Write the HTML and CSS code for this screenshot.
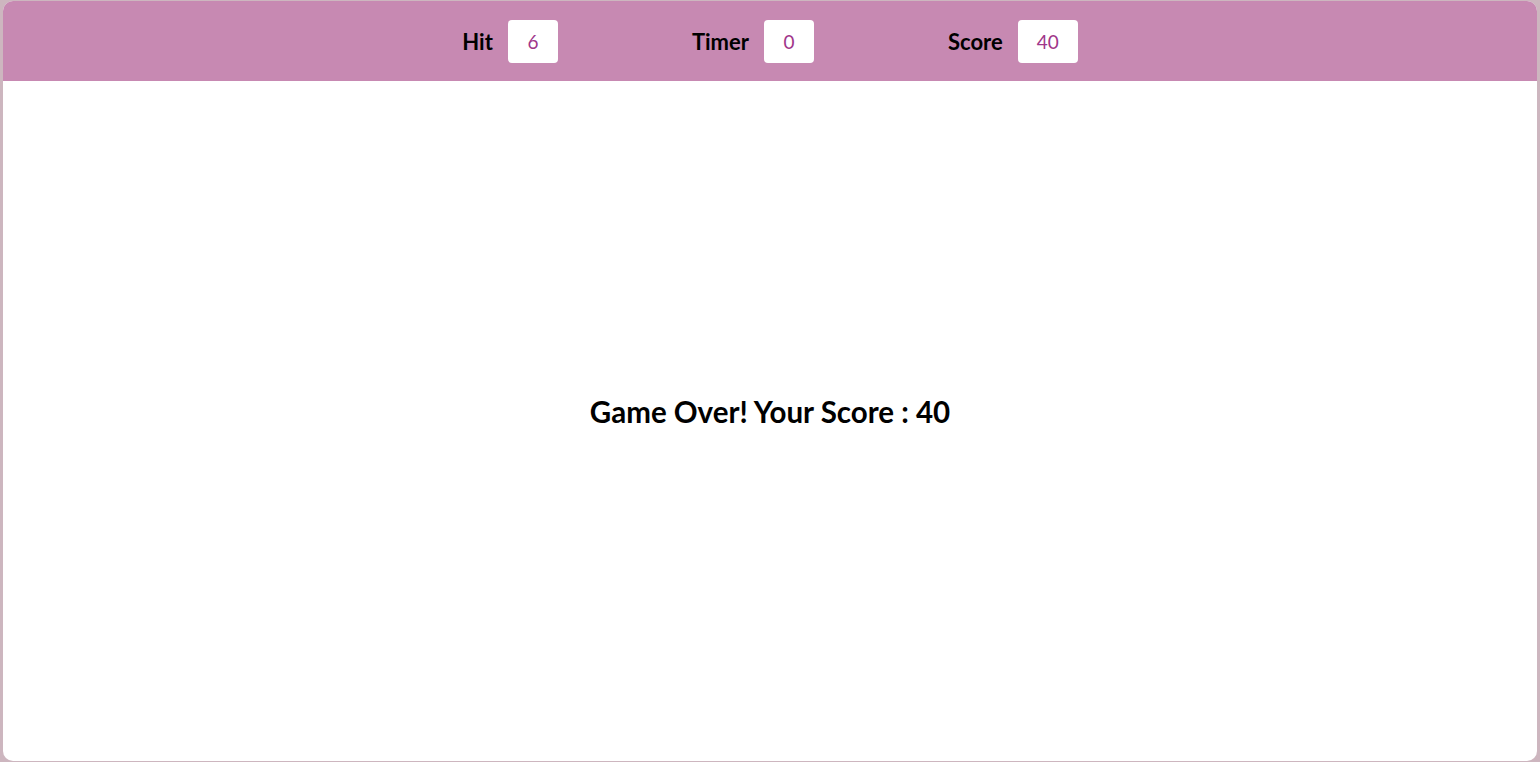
FILE: index.html
```html
<!DOCTYPE html>
<html>
<head>
<meta charset="utf-8">
<link rel="stylesheet" href="styles.css">
</head>
<body>
<div class="panel">
  <div class="bar">
    <div class="stat"><span class="label">Hit</span><span class="box">6</span></div>
    <div class="stat"><span class="label">Timer</span><span class="box">0</span></div>
    <div class="stat"><span class="label">Score</span><span class="box wide">40</span></div>
  </div>
  <div class="board">
    <h1 class="over">Game Over! Your Score : 40</h1>
  </div>
</div>
</body>
</html>
```

FILE: styles.css
```css
html, body {
  margin: 0;
  height: 100%;
}
body {
  background: #cdb6bf;
  padding: 1px 3px;
  box-sizing: border-box;
  font-family: Lato, "Open Sans", sans-serif;
}
.panel {
  height: 760px;
  background: #fff;
  border-radius: 10px;
  overflow: hidden;
  display: flex;
  flex-direction: column;
}
.bar {
  height: 80px;
  background: #c789b2;
  display: flex;
  align-items: center;
  justify-content: center;
  gap: 134px;
}
.stat {
  display: flex;
  align-items: center;
  gap: 15px;
}
.label {
  font-weight: 700;
  font-size: 22px;
  color: #000;
}
.box {
  width: 50px;
  height: 43px;
  background: #fff;
  border-radius: 4px;
  display: flex;
  align-items: center;
  justify-content: center;
  color: #a0368a;
  font-size: 19px;
}
.box.wide {
  width: 60px;
}
.board {
  flex: 1;
  display: flex;
  align-items: center;
  justify-content: center;
  padding-bottom: 20px;
}
.over {
  margin: 0;
  font-size: 29.5px;
  font-weight: 700;
  color: #000;
}
```
